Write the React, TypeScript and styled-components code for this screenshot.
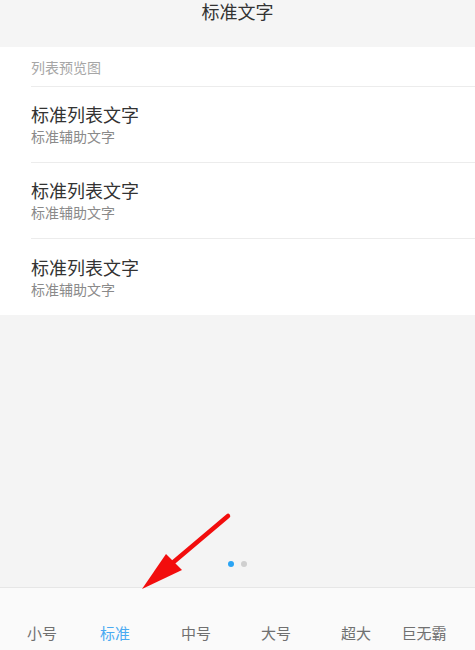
import React from "react"
import styled, {createGlobalStyle} from "styled-components"

const GlobalStyle = createGlobalStyle`
  html, body {
    margin: 0;
    padding: 0;
    background: #f4f4f4;
    font-family: "Noto Sans CJK SC", "Noto Sans", sans-serif;
  }
`;

const Page = styled.div`
  position: relative;
  width: 475px;
  height: 650px;
  display: flex;
  flex-direction: column;
  background: #f4f4f4;
  overflow: hidden;
`;

const Header = styled.div`
  height: 47px;
  flex-shrink: 0;
  background: #f5f5f5;
  display: flex;
  justify-content: center;
  align-items: flex-start;
`;

const HeaderTitle = styled.h1`
  margin: 0;
  font-size: 18px;
  font-weight: 400;
  line-height: 23px;
  color: #333;
`;

const ListCard = styled.div`
  background: #fff;
  flex-shrink: 0;
`;

const Caption = styled.div`
  height: 39px;
  margin-left: 31px;
  display: flex;
  align-items: center;
  font-size: 14px;
  color: #a6a6a6;
  border-bottom: 1px solid #ececec;
`;

const Item = styled.div<{$last?: boolean}>`
  height: 76px;
  margin-left: 31px;
  display: flex;
  flex-direction: column;
  justify-content: center;
  padding-bottom: 1px;
  box-sizing: border-box;
  border-bottom: ${props => props.$last ? "none" : "1px solid #ececec"};
`;

const ItemTitle = styled.div`
  font-size: 18px;
  line-height: 24px;
  color: #333;
`;

const ItemSub = styled.div`
  font-size: 14px;
  line-height: 20px;
  color: #8a8a8a;
`;

const Preview = styled.div`
  flex: 1;
  display: flex;
  justify-content: center;
  align-items: flex-end;
  padding-bottom: 20px;
  gap: 7px;
`;

const Dot = styled.span<{$active?: boolean}>`
  width: 6px;
  height: 6px;
  border-radius: 50%;
  background: ${props => props.$active ? "#2aa4f4" : "#cfcfcf"};
`;

const TabBar = styled.div`
  height: 63px;
  flex-shrink: 0;
  background: #fafafa;
  border-top: 1px solid #e6e6e6;
  display: grid;
  grid-template-columns: 84px 62px 100px 60px 100px 36px;
  align-items: end;
  padding-bottom: 6px;
  box-sizing: border-box;
`;

const Tab = styled.div<{$active?: boolean}>`
  display: flex;
  justify-content: center;
  white-space: nowrap;
  font-size: 15px;
  line-height: 22px;
  color: ${props => props.$active ? "#4aaaf2" : "#707070"};
`;

const Arrow = styled.svg`
  position: absolute;
  left: 0;
  top: 0;
  pointer-events: none;
`;

const tabs = ["小号", "标准", "中号", "大号", "超大", "巨无霸"]

const App = () => {
  return (
    <Page>
      <GlobalStyle/>
      <Header>
        <HeaderTitle>标准文字</HeaderTitle>
      </Header>
      <ListCard>
        <Caption>列表预览图</Caption>
        {[0, 1, 2].map(i => (
          <Item key={i} $last={i === 2}>
            <ItemTitle>标准列表文字</ItemTitle>
            <ItemSub>标准辅助文字</ItemSub>
          </Item>
        ))}
      </ListCard>
      <Preview>
        <Dot $active/>
        <Dot/>
      </Preview>
      <TabBar>
        {tabs.map(t => (
          <Tab key={t} $active={t === "标准"}>{t}</Tab>
        ))}
      </TabBar>
      <Arrow width="475" height="650" viewBox="0 0 475 650">
        <line x1="228" y1="516" x2="170" y2="565" stroke="#f20d0d" strokeWidth="4.5" strokeLinecap="round"/>
        <polygon points="142,589 166,554 182,570" fill="#f20d0d"/>
      </Arrow>
    </Page>
  )
}

export default App
